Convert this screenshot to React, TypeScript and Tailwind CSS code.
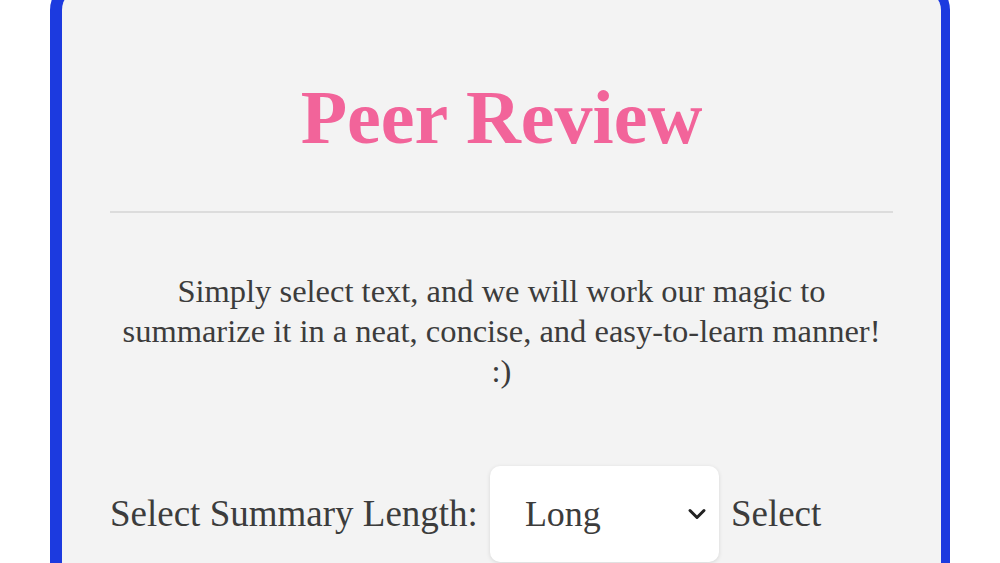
import { ChevronDown } from "lucide-react";

export default function App() {
  return (
    <div className="min-h-screen bg-white flex justify-center overflow-hidden" style={{ height: 563 }}>
      <div
        className="-mt-[20px] w-[900px] min-h-[700px] bg-[#f3f3f3] border-t-[10px] border-l-[12px] border-r-[9px] border-[#1c3adf] rounded-[30px] px-12 pt-[89px]"
        style={{ fontFamily: '"Liberation Serif", "Times New Roman", serif' }}
      >
        {/* Titulo */}
        <h1 className="text-center text-[76px] leading-none font-bold text-[#f2649a]">
          Peer Review
        </h1>

        <hr className="mt-[56px] border-0 h-[2px] bg-[#dcdcdc]" />

        {/* Descripcion */}
        <p className="mt-[58px] px-2 text-center text-[32.5px] leading-[40px] text-[#3c3c3c]">
          Simply select text, and we will work our magic to summarize it in a neat, concise, and easy-to-learn manner! :)
        </p>

        {/* Opciones */}
        <div className="mt-[75px] flex items-center gap-3 text-[37px] text-[#3c3c3c]">
          <label htmlFor="largo">Select Summary Length:</label>
          <div className="relative">
            <select
              id="largo"
              defaultValue="long"
              className="appearance-none w-[229px] h-[96px] bg-white rounded-[10px] shadow-[0_1px_4px_rgba(0,0,0,0.12)] pl-[35px] text-[36px] text-[#3c3c3c] outline-none"
              style={{ fontFamily: '"Liberation Serif", "Times New Roman", serif' }}
            >
              <option value="short">Short</option>
              <option value="medium">Medium</option>
              <option value="long">Long</option>
            </select>
            <ChevronDown
              size={28}
              strokeWidth={2.6}
              className="absolute right-[8px] top-1/2 -translate-y-1/2 text-[#222] pointer-events-none"
            />
          </div>
          <span>Select</span>
        </div>
      </div>
    </div>
  );
}
